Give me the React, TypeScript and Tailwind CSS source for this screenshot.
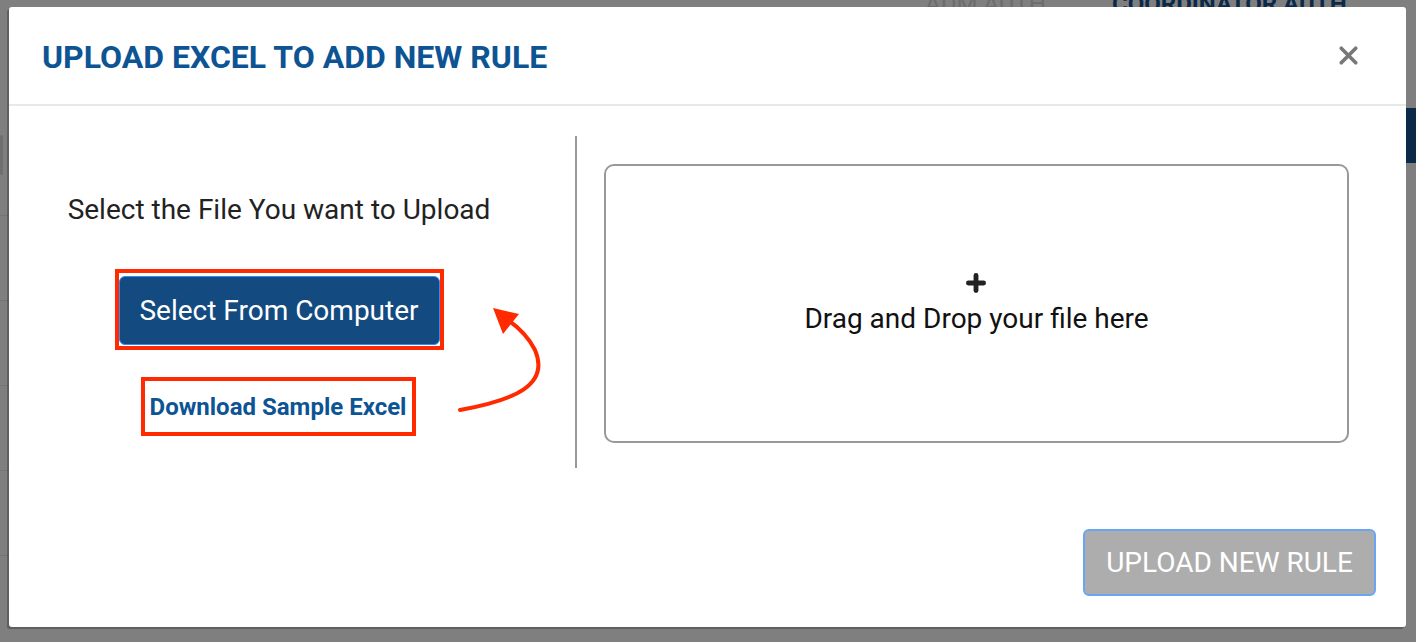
import { X, Plus } from 'lucide-react';

function CurvedArrow() {
  return (
    <svg width="100" height="120" viewBox="0 0 100 120" className="absolute left-[455px] top-[300px]">
      <path d="M5 110 C 60 100, 95 85, 80 50 C 73 36, 62 26, 50 18" fill="none" stroke="#ff2a00" strokeWidth="4" strokeLinecap="round" />
      <path d="M38 8 L 64 14 L 48 34 Z" fill="#ff2a00" />
    </svg>
  );
}

export default function App() {
  return (
    <div className="relative w-[1416px] h-[642px] overflow-hidden bg-[#7f7f7f] font-['Roboto',sans-serif]">
      {/* page behind the overlay */}
      <div className="absolute top-[-14px] left-[925px] text-[24px] text-[#6c6c6c]">ADM AUTH</div>
      <div className="absolute top-[-14px] left-[1112px] text-[24px] font-bold text-[#0b2a4a]">COORDINATOR AUTH</div>
      <div className="absolute top-[108px] left-[1400px] w-[20px] h-[55px] bg-[#0b2a4a]" />
      <div className="absolute top-[135px] left-0 w-[3px] h-[40px] rounded bg-[#6f6f6f]" />
      <div className="absolute top-[215px] left-0 w-[9px] h-[1px] bg-[#757575]" />
      <div className="absolute top-[300px] left-0 w-[9px] h-[1px] bg-[#757575]" />
      <div className="absolute top-[385px] left-0 w-[9px] h-[1px] bg-[#757575]" />
      <div className="absolute top-[470px] left-0 w-[9px] h-[1px] bg-[#757575]" />
      <div className="absolute top-[555px] left-0 w-[9px] h-[1px] bg-[#757575]" />

      <div className="absolute left-[9px] top-[7px] w-[1397px] h-[620px] bg-white rounded-[3px] shadow-[-2px_2px_0_rgba(0,0,0,0.25)] flex flex-col">
        <div className="h-[99px] border-b-2 border-[#e8e8e8] flex items-center justify-between pl-[33px] pr-[43px]">
          <h2 className="text-[32px] font-bold text-[#0d5494] pt-[2px]">UPLOAD EXCEL TO ADD NEW RULE</h2>
          <X size={29} strokeWidth={3} className="text-[#777]" />
        </div>

        <div className="flex pt-[30px] h-[364px]">
          <div className="w-[538px] flex flex-col items-center pt-[53px] relative">
            <p className="text-[28px] text-[#222] ml-[2px]">Select the File You want to Upload</p>
            <div className="mt-[38px] border-[4px] border-[#ff2a00] pt-[3px] pb-[1px] ml-[2px]">
              <button className="w-[321px] h-[69px] bg-[#134a7f] border border-[#2d8cff] rounded-[6px] text-white text-[28px]">
                Select From Computer
              </button>
            </div>
            <div className="mt-[27px] border-[4px] border-[#ff2a00] w-[275px] h-[59px] flex items-center justify-center">
              <a className="text-[24px] font-bold text-[#0d5494]">Download Sample Excel</a>
            </div>
          </div>
          <div className="ml-[28px] w-[2px] h-[332px] bg-[#999]" />
          <div className="flex-1 pl-[27px] pr-[57px] pt-[28px]">
            <div className="h-[279px] border-2 border-[#999] rounded-[10px] flex flex-col items-center justify-center pt-[8px]">
              <Plus size={26} strokeWidth={4.5} className="text-[#222] ml-[-2px] mt-[-6px]" />
              <div className="text-[28px] text-[#111] mt-[2px]">Drag and Drop your file here</div>
            </div>
          </div>
        </div>

        <div className="flex-1 flex justify-end items-start pt-[59px] pr-[30px]">
          <button className="w-[293px] h-[67px] bg-[#adadad] border-2 border-[#6aa5f5] rounded-[6px] text-white text-[28px]">
            UPLOAD NEW RULE
          </button>
        </div>
      </div>
      <CurvedArrow />
    </div>
  );
}
